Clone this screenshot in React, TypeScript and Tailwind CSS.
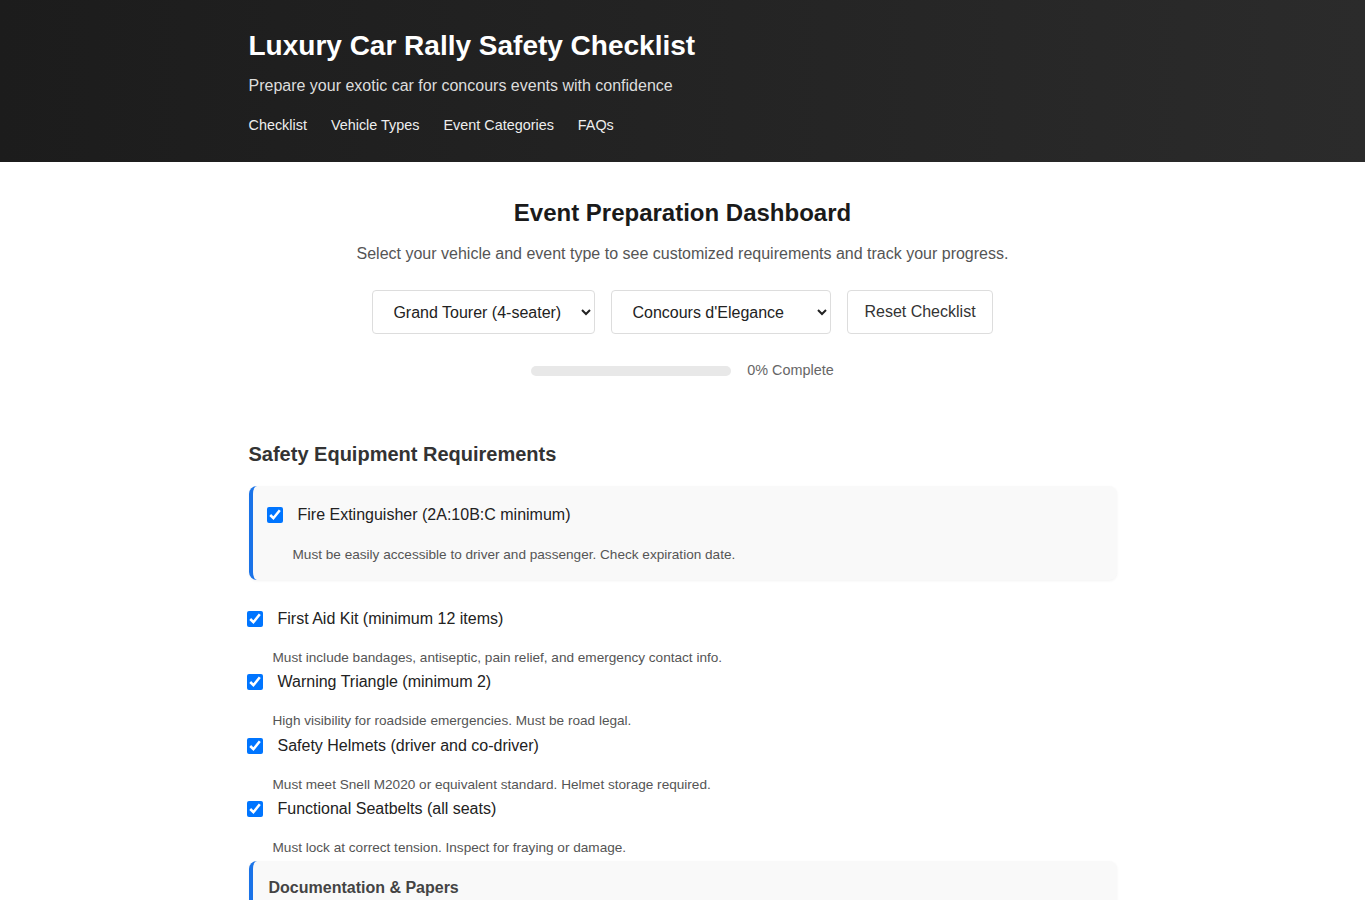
import { useState } from "react";

const items = [
  { label: "First Aid Kit (minimum 12 items)", desc: "Must include bandages, antiseptic, pain relief, and emergency contact info." },
  { label: "Warning Triangle (minimum 2)", desc: "High visibility for roadside emergencies. Must be road legal." },
  { label: "Safety Helmets (driver and co-driver)", desc: "Must meet Snell M2020 or equivalent standard. Helmet storage required." },
  { label: "Functional Seatbelts (all seats)", desc: "Must lock at correct tension. Inspect for fraying or damage." },
];

function Item({ label, desc, inCard = false }: { label: string; desc: string; inCard?: boolean }) {
  const [on, setOn] = useState(true);
  return (
    <div className="flex flex-col">
      <label className="flex items-center gap-[15px] h-[24px] text-[16px] text-[#222] cursor-pointer">
        <input
          type="checkbox"
          checked={on}
          onChange={() => setOn(!on)}
          className="w-[16px] h-[16px] m-0 shrink-0 accent-[#0075ff]"
        />
        {label}
      </label>
      <p className={`ml-[26px] ${inCard ? "mt-[19px]" : "mt-[18px]"} text-[13.6px] leading-[18px] text-[#555]`}>{desc}</p>
    </div>
  );
}

export default function App() {
  return (
    <div className="min-h-screen bg-white font-['Liberation_Sans',Arial,sans-serif]">
      <header className="bg-gradient-to-r from-[#1c1c1c] to-[#2b2b2b] text-white">
        <div className="max-w-[868px] mx-auto pt-[29px] pb-[25px]">
          <h1 className="text-[28px] leading-[34px] font-bold">Luxury Car Rally Safety Checklist</h1>
          <p className="mt-[11px] text-[16px] leading-[24px] text-[#dddddd]">
            Prepare your exotic car for concours events with confidence
          </p>
          <nav className="mt-[15px] flex gap-6 text-[14.4px] leading-[24px] text-[#eeeeee]">
            <a href="#checklist">Checklist</a>
            <a href="#vehicles">Vehicle Types</a>
            <a href="#events">Event Categories</a>
            <a href="#faq">FAQs</a>
          </nav>
        </div>
      </header>

      <main className="max-w-[868px] mx-auto">
        <section className="pt-[37px] flex flex-col items-center text-center">
          <h2 className="text-[24px] leading-[28px] font-bold text-[#1a1a1a]">Event Preparation Dashboard</h2>
          <p className="mt-[15px] text-[16px] leading-[24px] text-[#555]">
            Select your vehicle and event type to see customized requirements and track your progress.
          </p>
          <div className="mt-[24px] flex gap-4">
            <select
              defaultValue="gt"
              className="w-[223px] h-[44px] pl-[16px] pr-[8px] text-[16px] text-[#222] bg-white border border-[#dddddd] rounded"
            >
              <option value="gt">Grand Tourer (4-seater)</option>
              <option value="sc">Supercar (2-seater)</option>
            </select>
            <select
              defaultValue="ce"
              className="w-[220px] h-[44px] pl-[16px] pr-[8px] text-[16px] text-[#222] bg-white border border-[#dddddd] rounded"
            >
              <option value="ce">Concours d'Elegance</option>
              <option value="tr">Touring Rally</option>
            </select>
            <button className="h-[44px] px-[16px] text-[16px] text-[#333] bg-white border border-[#dddddd] rounded">
              Reset Checklist
            </button>
          </div>
          <div className="mt-[27px] h-[20px] flex items-center gap-4">
            <div className="w-[200px] h-[10px] rounded-full bg-[#e8e8e8]">
              <div className="h-full w-0 rounded-full bg-[#1a73e8]" />
            </div>
            <span className="text-[14.4px] text-[#666]">0% Complete</span>
          </div>
        </section>

        <section className="mt-[61px]">
          <h3 className="text-[20px] leading-[24px] font-bold text-[#333]">Safety Equipment Requirements</h3>

          <div className="mt-[20px] bg-[#f9f9f9] border-l-4 border-[#1a73e8] rounded-lg pl-[14px] pt-[17px] pb-[16px] shadow-[0_1px_3px_rgba(0,0,0,0.05)]">
            <Item
              inCard
              label="Fire Extinguisher (2A:10B:C minimum)"
              desc="Must be easily accessible to driver and passenger. Check expiration date."
            />
          </div>

          <div className="mt-[27px] -ml-[2px] flex flex-col gap-[3.4px]">
            {items.map((it) => (
              <Item key={it.label} label={it.label} desc={it.desc} />
            ))}
          </div>

          <div className="mt-[4px] bg-[#f9f9f9] border-l-4 border-[#1a73e8] rounded-lg pl-[16px] pt-[17px] pb-[20px] shadow-[0_1px_3px_rgba(0,0,0,0.05)]">
            <h4 className="text-[16px] leading-[20px] font-bold text-[#444]">Documentation &amp; Papers</h4>
          </div>
        </section>
      </main>
    </div>
  );
}
